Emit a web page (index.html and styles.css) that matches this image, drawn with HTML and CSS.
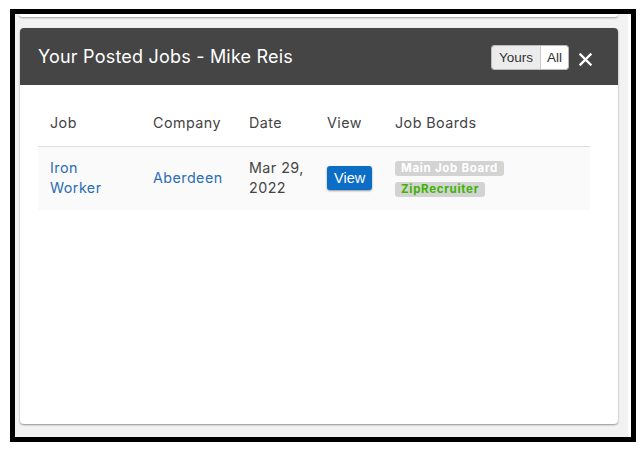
FILE: index.html
```html
<!DOCTYPE html>
<html lang="en">

<head>
  <meta charset="UTF-8">
  <meta name="viewport" content="width=device-width, initial-scale=1.0">
  <title>Your Posted Jobs</title>
  <link rel="stylesheet" href="styles.css">
</head>

<body>
  <div class="frame">
    <div class="screen">
      <div class="card-prev"></div>

      <div class="card">
        <div class="card-header">
          <h2>Your Posted Jobs - Mike Reis</h2>
          <div class="toggle">
            <button type="button" class="toggle-btn">Yours</button>
            <button type="button" class="toggle-btn active">All</button>
          </div>
          <button type="button" class="close" aria-label="Close">
            <svg width="13" height="13" viewBox="0 0 13 13">
              <path d="M1.5 1.5 L11.5 11.5 M11.5 1.5 L1.5 11.5" stroke="#fff" stroke-width="2.4" stroke-linecap="square" fill="none"/>
            </svg>
          </button>
        </div>

        <table class="jobs">
          <thead>
            <tr>
              <th class="col-job">Job</th>
              <th class="col-company">Company</th>
              <th class="col-date">Date</th>
              <th class="col-view">View</th>
              <th>Job Boards</th>
            </tr>
          </thead>
          <tbody>
            <tr>
              <td><a href="#">Iron<br>Worker</a></td>
              <td><a href="#">Aberdeen</a></td>
              <td>Mar 29,<br>2022</td>
              <td><button type="button" class="view">View</button></td>
              <td>
                <span class="badge">Main Job Board</span>
                <span class="badge zip">ZipRecruiter</span>
              </td>
            </tr>
          </tbody>
        </table>
      </div>
    </div>
  </div>
</body>

</html>
```

FILE: styles.css
```css
body {
  margin: 0;
  padding: 0;
  background: #fff;
  font-family: Inter, "Noto Sans", sans-serif;
  color: #444;
}

.frame {
  width: 616px;
  height: 423px;
  margin: 9px 0 0 10px;
  border: 5px solid #000;
  background: #fff;
}

.screen {
  width: 613px;
  height: 423px;
  background: #f2f2f2;
  overflow: hidden;
}

.card-prev {
  height: 3px;
  margin: 0 10px 0 4px;
  background: #fff;
  border-radius: 0 0 4px 4px;
  box-shadow: 0 1px 2px rgba(0,0,0,0.35);
}

.card {
  margin: 11px 10px 0 5px;
  height: 396px;
  background: #fff;
  border-radius: 4px;
  box-shadow: 0 1px 2px rgba(0,0,0,0.4);
  overflow: hidden;
}

.card-header {
  display: flex;
  align-items: center;
  height: 57px;
  padding: 0 26px 0 18px;
  background: #454545;
  color: #fff;
}

.card-header h2 {
  flex: 1;
  margin: 0;
  font-size: 18px;
  font-weight: 400;
  letter-spacing: 0.2px;
}

.toggle {
  display: flex;
  margin-top: 2px;
  border: 1px solid #bbb;
  border-radius: 3px;
  overflow: hidden;
}

.toggle-btn {
  padding: 4px 7px;
  border: 0;
  background: #ececec;
  color: #333;
  font-family: "Liberation Sans", Arial, sans-serif;
  font-size: 13.5px;
  cursor: pointer;
}

.toggle-btn.active {
  padding: 4px 6px;
  background: #fff;
  border-left: 1px solid #ccc;
}

.close {
  display: flex;
  margin: 6px 0 0 10px;
  padding: 0;
  border: 0;
  background: none;
  cursor: pointer;
}

.jobs {
  width: 552px;
  margin: 16px 0 0 18px;
  border-collapse: collapse;
  table-layout: fixed;
  font-size: 14.3px;
  letter-spacing: 0.45px;
}

.jobs th {
  padding: 11px 12px 13px;
  line-height: 21px;
  font-weight: 400;
  text-align: left;
  border-bottom: 1px solid #ddd;
}

.col-job { width: 79px; }
.col-company { width: 72px; }
.col-date { width: 54px; }
.col-view { width: 44px; }

.jobs td {
  padding: 11px 12px 12px;
  line-height: 20px;
  background: #fafafa;
  vertical-align: middle;
  white-space: nowrap;
}

.jobs a {
  color: #2a6db8;
  text-decoration: none;
}

.view {
  padding: 4px 7px;
  border: 0;
  border-radius: 3px;
  background: #0b6dc6;
  color: #fff;
  font-family: "Liberation Sans", Arial, sans-serif;
  font-size: 14.5px;
  letter-spacing: 0;
  box-shadow: 0 1px 2px rgba(0,0,0,0.4);
  cursor: pointer;
}

.badge {
  display: block;
  width: fit-content;
  margin: 2px 0 6px;
  padding: 0 6px;
  line-height: 15px;
  border-radius: 3px;
  background: #d3d3d3;
  color: #fff;
  font-size: 11.5px;
  font-weight: 700;
  letter-spacing: 0.7px;
}

.badge.zip {
  margin: 0;
}

.badge.zip {
  color: #3db400;
}
```
